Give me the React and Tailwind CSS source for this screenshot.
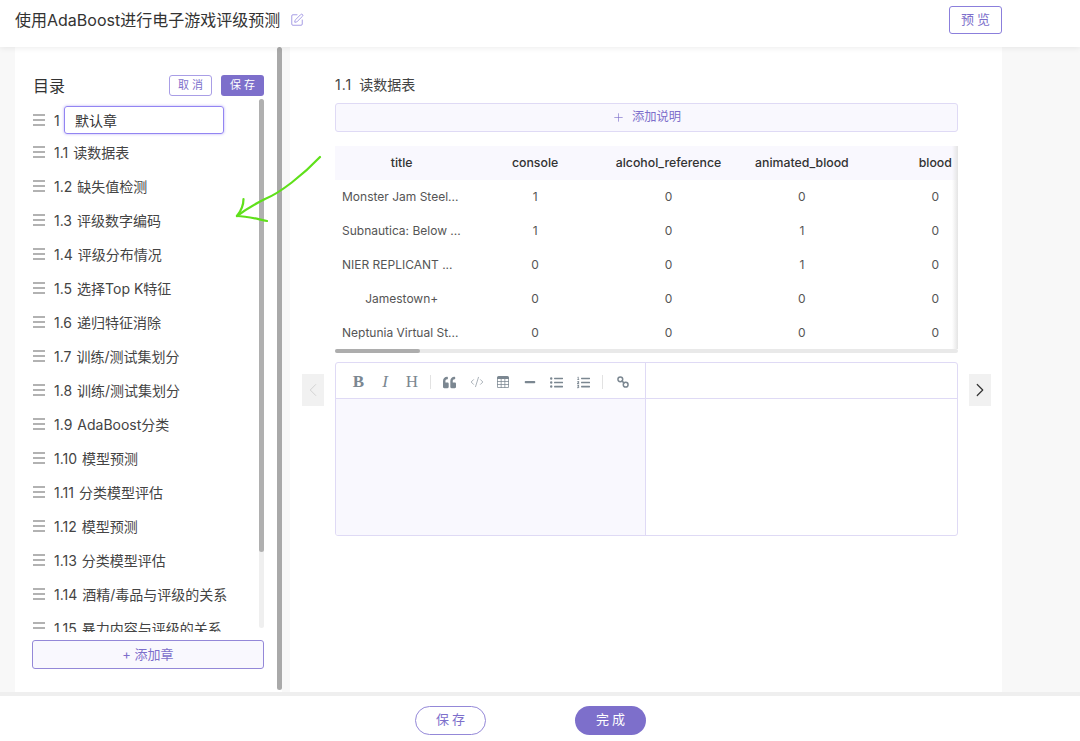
import React from 'react';
import { Plus, SquarePen, ChevronLeft, ChevronRight, CodeXml } from 'lucide-react';
import { FaQuoteLeft, FaMinus, FaListUl, FaListOl } from 'react-icons/fa';
import { BsTable } from 'react-icons/bs';

const chapters = [
  ['1.1', '读数据表'],
  ['1.2', '缺失值检测'],
  ['1.3', '评级数字编码'],
  ['1.4', '评级分布情况'],
  ['1.5', '选择Top K特征'],
  ['1.6', '递归特征消除'],
  ['1.7', '训练/测试集划分'],
  ['1.8', '训练/测试集划分'],
  ['1.9', 'AdaBoost分类'],
  ['1.10', '模型预测'],
  ['1.11', '分类模型评估'],
  ['1.12', '模型预测'],
  ['1.13', '分类模型评估'],
  ['1.14', '酒精/毒品与评级的关系'],
  ['1.15', '暴力内容与评级的关系'],
];

const columns = ['title', 'console', 'alcohol_reference', 'animated_blood', 'blood'];

const rows = [
  ['Monster Jam Steel...', 1, 0, 0, 0],
  ['Subnautica: Below ...', 1, 0, 1, 0],
  ['NIER REPLICANT ...', 0, 0, 1, 0],
  ['Jamestown+', 0, 0, 0, 0],
  ['Neptunia Virtual St...', 0, 0, 0, 0],
];

const Bars = () => (
  <svg width="12" height="12" viewBox="0 0 12 12" className="shrink-0 ml-[1px] text-[#666]">
    <path d="M0 1h12M0 6h12M0 11h12" stroke="currentColor" strokeWidth="1.2" fill="none" />
  </svg>
);

const Sidebar = () => (
  <aside className="relative ml-[15px] w-[267px] h-[645px] bg-white pl-[17px] pr-[18px] pt-[28px]">
    <div className="flex items-center h-[21px]">
      <span className="ml-[1px] text-[16px] text-[#333] leading-none">目录</span>
      <button className="ml-auto w-[43px] h-[21px] pl-[3px] rounded-[3px] border border-[#a99ee6] bg-white text-[#7d6fcb] text-[11px] tracking-[3px] leading-none">取消</button>
      <button className="ml-[9px] w-[43px] h-[21px] pl-[3px] rounded-[3px] bg-[#7d6fcb] text-white text-[11px] tracking-[3px] leading-none">保存</button>
    </div>
    <div className="relative mt-[1px] h-[535px] overflow-hidden">
      <div className="flex items-center h-[30px] mt-[8px]">
        <Bars />
        <span className="ml-[9px] w-[10px] text-[14px] text-[#444]">1</span>
        <div className="w-[160px] h-[28px] rounded-[3px] border border-[#9385f2] shadow-[0_0_3px_#b9aef7] pl-[10px] flex items-center text-[14px] text-[#333]">默认章</div>
      </div>
      <div>
        {chapters.map(([num, name]) => (
          <div key={num} className="flex items-center h-[34px] text-[14px] text-[#444]">
            <Bars />
            <span className="ml-[9px] mr-[5px]">{num}</span>
            <span>{name}</span>
          </div>
        ))}
      </div>
      <div className="absolute right-0 top-[2px] w-[5px] h-[529px] rounded-full bg-[#efefef]">
        <div className="w-[5px] h-[453px] rounded-full bg-[#b0b0b0]"></div>
      </div>
    </div>
    <button className="mt-[8px] w-[232px] h-[29px] rounded-[3px] border border-[#9488d8] bg-[#f9f8fe] text-[#7d6fcb] text-[13px]">+ 添加章</button>
    <div className="absolute right-0 top-0 w-[5px] h-[643px] rounded-full bg-[#a9a9a9]"></div>
  </aside>
);

const DataTable = () => (
  <div className="relative mt-[14px] w-[623px] overflow-hidden">
    <div className="w-[667px] grid grid-cols-5 text-[12.3px]">
      {columns.map((c) => (
        <div key={c} className="h-[34px] bg-[#f9f8fe] flex items-center justify-center font-medium text-[#333]">{c}</div>
      ))}
      {rows.map((r) =>
        r.map((v, i) => (
          <div
            key={i}
            className={
              i === 0 && v !== 'Jamestown+'
                ? 'h-[34px] flex items-center pl-[7px] text-[12px] text-[#555] whitespace-nowrap'
                : 'h-[34px] flex items-center justify-center text-[12px] text-[#555] whitespace-nowrap'
            }
          >
            {v}
          </div>
        ))
      )}
    </div>
    <div className="absolute right-0 top-0 w-[6px] h-[203px] bg-gradient-to-r from-transparent to-[#e4e4e4]"></div>
    <div className="mt-[-1px] h-[4px] rounded-full bg-[#e9e9e9]">
      <div className="w-[85px] h-[4px] rounded-full bg-[#adadad]"></div>
    </div>
  </div>
);

const Slot = ({ children }) => (
  <span className="w-[26.8px] flex items-center justify-center">{children}</span>
);

const Toolbar = () => (
  <div className="flex items-center h-[35px] pt-[3px] pl-[9px] text-[#7b8791] font-['Liberation_Serif',serif] text-[17px]">
    <Slot><b>B</b></Slot>
    <Slot><i>I</i></Slot>
    <Slot>H</Slot>
    <span className="w-px h-[14px] bg-[#e2e2e2] ml-[5px] mr-[5px]"></span>
    <Slot><FaQuoteLeft size={13} /></Slot>
    <Slot><CodeXml size={14} strokeWidth={1.1} /></Slot>
    <Slot><BsTable size={12} /></Slot>
    <Slot><FaMinus size={12} /></Slot>
    <Slot><FaListUl size={13} /></Slot>
    <Slot><FaListOl size={13} /></Slot>
    <span className="w-px h-[14px] bg-[#e2e2e2] ml-[5px] mr-[6px]"></span>
    <Slot>
      <svg width="12" height="12" viewBox="0 0 13 13" fill="none" stroke="currentColor" strokeWidth="1.6">
        <circle cx="3.6" cy="3.6" r="2.6" />
        <circle cx="9.4" cy="9.4" r="2.6" />
        <path d="M5 5l3 3" />
      </svg>
    </Slot>
  </div>
);

const Editor = () => (
  <div className="flex items-start mt-[9px]">
    <button className="mt-[12px] ml-[12px] w-[22px] h-[32px] bg-[#f1f1f1] flex items-center justify-center text-[#cfcfcf]">
      <ChevronLeft size={22} strokeWidth={1} />
    </button>
    <div className="ml-[11px] w-[623px] h-[174px] rounded-[3px] border border-[#dfdaf5] grid grid-cols-[310px_1fr] overflow-hidden">
      <div className="border-r border-[#dfdaf5] flex flex-col">
        <Toolbar />
        <div className="flex-1 border-t border-[#dfdaf5] bg-[#f9f8fe]"></div>
      </div>
      <div className="flex flex-col">
        <div className="h-[35px]"></div>
        <div className="flex-1 border-t border-[#dfdaf5]"></div>
      </div>
    </div>
    <button className="mt-[12px] ml-[11px] w-[22px] h-[32px] bg-[#f1f1f1] flex items-center justify-center text-[#333]">
      <ChevronRight size={22} strokeWidth={1.3} />
    </button>
  </div>
);

export default function App() {
  return (
    <div className="relative w-[1080px] h-[741px] overflow-hidden flex flex-col bg-[#f8f8f8] font-['Inter','Noto_Sans_CJK_SC',sans-serif]">
      <header className="relative z-10 h-[47px] shrink-0 bg-white shadow-[0_1px_6px_rgba(0,0,0,0.08)] flex items-center pl-[15px] pb-[7px]">
        <h1 className="text-[16px] text-[#333] font-normal">使用AdaBoost进行电子游戏评级预测</h1>
        <SquarePen size={14} strokeWidth={1.3} className="ml-[10px] text-[#8b7fdc]" />
        <button className="ml-auto mr-[78px] w-[53px] h-[28px] pl-[3px] rounded-[3px] border border-[#8b7fdc] text-[#7d6fcb] text-[13px] tracking-[3px]">预览</button>
      </header>

      <main className="flex h-[645px] shrink-0">
        <Sidebar />
        <section className="ml-[8px] w-[712px] bg-white">
          <div className="ml-[45px] pt-[28px]">
            <h2 className="text-[14px] leading-[20px] text-[#444] font-normal">
              <span className="tracking-[1px] mr-[3px]">1.1</span> 读数据表
            </h2>
            <button className="mt-[8px] w-[623px] h-[29px] rounded-[3px] border border-[#dfdaf5] bg-[#f9f8fe] text-[#7d6fcb] text-[12.3px] flex items-center justify-center">
              <Plus size={13} strokeWidth={1.2} className="mr-[7px]" />
              添加说明
            </button>
            <DataTable />
          </div>
          <Editor />
        </section>
      </main>

      <footer className="relative z-10 flex-1 bg-white border-t-[4px] border-[#efefef] flex items-center pl-[415px] pt-[3px]">
        <button className="w-[71px] h-[29px] pl-[3px] rounded-full border border-[#9488d8] text-[#7d6fcb] text-[13px] tracking-[3px]">保存</button>
        <button className="ml-[89px] w-[71px] h-[29px] pl-[3px] rounded-full bg-[#7d6fcb] text-white text-[13px] tracking-[3px]">完成</button>
      </footer>

      <svg className="absolute left-[235px] top-[155px] z-20" width="88" height="70" viewBox="0 0 88 70" fill="none">
        <path d="M85 2C68 20 45 38 30 44C20 49 10 55 2 61" stroke="#5fe01a" strokeWidth="2.2" strokeLinecap="round" />
        <path d="M8.5 44C8.5 50 6 56 2 61C12 61 22 64 32 66" stroke="#5fe01a" strokeWidth="2.2" strokeLinecap="round" strokeLinejoin="round" />
      </svg>
    </div>
  );
}
